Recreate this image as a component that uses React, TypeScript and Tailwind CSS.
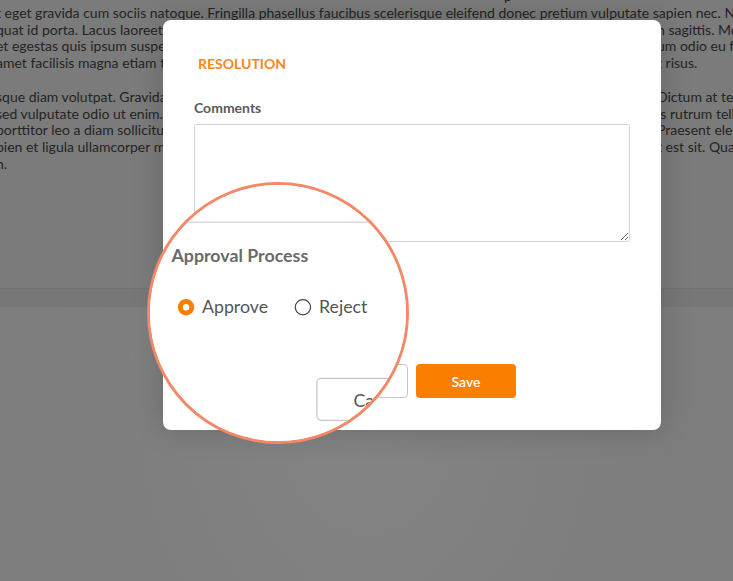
import React from 'react';

const firstPara = [
  ['quat id porta. Lacus laoreet non curabitur gravida arcu ac tortor dignissim convallis aenean et tortor at risus viverra adipiscing at i', 'n sagittis. Morbi tristique'],
  ['et egestas quis ipsum suspendisse ultrices gravida dictum fusce ut placerat orci nulla pellentesque dignissim enim sit amet venenatis', 'um odio eu facilisis'],
  ['amet facilisis magna etiam tempor orci eu lobortis elementum nibh tellus molestie nunc non blandit massa enim nec dui nunc mattis enim', 't risus.'],
];

const secondPara = [
  ['sque diam volutpat. Gravida quis blandit turpis cursus in hac habitasse platea dictumst quisque sagittis purus sit amet volutpat consequat', 'Dictum at tempor'],
  ['sed vulputate odio ut enim. Blandit volutpat maecenas volutpat blandit aliquam etiam erat velit scelerisque in dictum non consectetur', 'is rutrum tellus'],
  ['porttitor leo a diam sollicitudin tempor id eu nisl nunc mi ipsum faucibus vitae aliquet nec ullamcorper sit amet risus nullam eget', 'Praesent elementum'],
  ['pien et ligula ullamcorper malesuada proin libero nunc consequat interdum varius sit amet mattis vulputate enim nulla aliquet porttitor', 't est sit. Quam'],
];

function TextLine({ left, right }: { left: string; right: string }) {
  return (
    <div className="flex whitespace-nowrap">
      <span className="w-[661px] shrink-0 overflow-hidden">{left}</span>
      <span>{right}</span>
    </div>
  );
}

function ModalBody() {
  return (
    <div className="flex h-[410px] w-[498px] flex-col rounded-lg bg-white px-[31px] pt-[36px] font-['Lato',sans-serif]">
      <h2 className="pl-[4px] text-[14px] leading-4 font-bold text-[#f7861c]">RESOLUTION</h2>
      <label className="mt-[28px] text-[14px] leading-4 font-bold text-[#5a5a5a]">Comments</label>
      <textarea
        readOnly
        className="mt-[8px] h-[118px] w-[436px] rounded-[3px] border border-[#cfd4dc] bg-white outline-none"
      />
      <h3 className="mt-[18px] text-[14px] leading-4 font-bold text-[#6a6a6a]">Approval Process</h3>
      {/* radios */}
      <div className="mt-[24px] flex items-center pl-[5px] text-[14px] leading-4 text-[#555]">
        <span className="h-[13px] w-[13px] rounded-full border-[4px] border-[#f77f00] bg-white" />
        <span className="ml-[6px]">Approve</span>
        <span className="ml-[21px] h-[13px] w-[13px] rounded-full border-[1.6px] border-[#444] bg-white" />
        <span className="ml-[6px]">Reject</span>
      </div>
      <div className="mt-[48px] flex justify-center gap-2">
        <button className="h-[34px] w-[100px] rounded-[4px] border border-[#c8c8c8] bg-white text-[14px] text-[#555]">
          Cancel
        </button>
        <button className="h-[34px] w-[100px] rounded-[4px] bg-[#fa7f00] text-[14px] font-semibold text-white">
          Save
        </button>
      </div>
    </div>
  );
}

export default function App() {
  return (
    <div className="relative h-[581px] w-full overflow-hidden bg-[#7e7e7e] font-['Lato',sans-serif]">
      {/* page under overlay */}
      <div className="h-[288px] overflow-hidden bg-[#7b7b7b] text-[14px] leading-[16.8px] text-[#242424]">
        <div className="mt-[-12px] ml-[-4px]">
          <div className="h-[16.8px] whitespace-nowrap pl-[508px]">p</div>
          <div className="whitespace-nowrap">
            t eget gravida cum sociis natoque. Fringilla phasellus faucibus scelerisque eleifend donec pretium vulputate sapien nec. Nam
          </div>
          {firstPara.map(([l, r]) => (
            <TextLine key={l} left={l} right={r} />
          ))}
          <div className="h-[16.8px]" />
          {secondPara.map(([l, r]) => (
            <TextLine key={l} left={l} right={r} />
          ))}
          <div>n.</div>
        </div>
      </div>
      <div className="h-[19px] border-t border-[#727272] bg-[#777]" />
      <div className="h-full bg-[radial-gradient(ellipse_at_50%_20%,#838383,#7d7d7d_60%)]" />

      {/* dialog */}
      <div className="absolute top-[20px] left-[163px] rounded-lg shadow-[0_0_30px_rgba(0,0,0,0.18)]">
        <ModalBody />
      </div>

      {/* magnifier */}
      <div className="absolute top-[182px] left-[147px] h-[262px] w-[262px] overflow-hidden rounded-full border-[3px] border-[#f4896a] bg-white">
        <div className="absolute top-[-165px] left-[13px] origin-[114.5px_293px] scale-[1.27]">
          <ModalBody />
        </div>
      </div>
    </div>
  );
}
